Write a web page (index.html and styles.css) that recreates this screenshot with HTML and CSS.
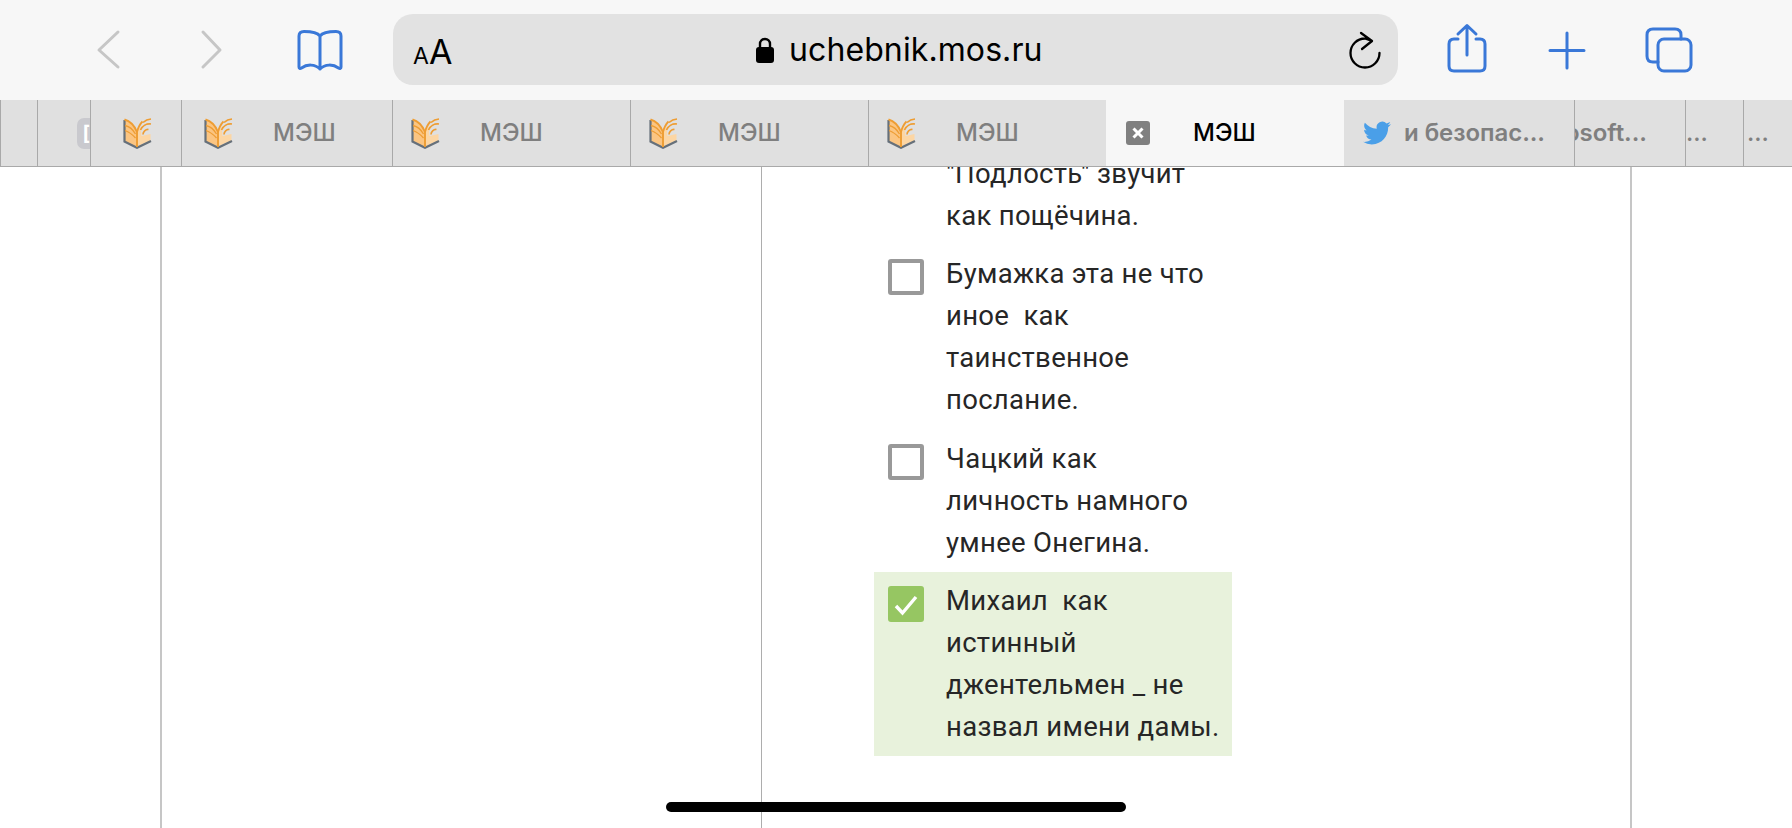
FILE: index.html
```html
<!DOCTYPE html>
<html lang="ru">
<head>
<meta charset="utf-8">
<title>uchebnik.mos.ru</title>
<link rel="stylesheet" href="styles.css">
</head>
<body>
<svg class="defs" width="0" height="0" aria-hidden="true">
  <symbol id="mesh" viewBox="0 0 29 32">
    <path d="M1.500 2.500 C7 4 11.500 9 14 15 V30.500 C10 28 5.500 26 1.500 24.500 Z" fill="#fbc582"/>
    <path d="M14 15 C15 12.500 16 10.500 17.500 9 L18.500 19 L27.500 17 V24 C22 25.500 18 27 14 30.500 Z" fill="#fcd6a4"/>
    <path d="M1.500 3 V24.500 L14 30.800 L28 24" fill="none" stroke="#66707a" stroke-width="2.200"/>
    <path d="M1.500 2.500 C7 4 11.500 9 14 15 V30" fill="none" stroke="#ee9d33" stroke-width="1.900"/>
    <path d="M2 8.500 C6 9.500 10 12.500 12.500 17 M2 13.500 C5 14.500 9 17 12.500 21" fill="none" stroke="#ee9d33" stroke-width="1.300"/>
    <path d="M14 15 C15 11 17 7 19.500 4.500" fill="none" stroke="#ee9d33" stroke-width="1.800"/>
    <path d="M20 17.500 A5 5 0 0 1 25.500 12.500 M17.500 13 A10 10 0 0 1 28 7 M20 5.500 A13 13 0 0 1 28 2" fill="none" stroke="#ee9d33" stroke-width="1.700"/>
  </symbol>
</svg>

<header class="toolbar">
  <div class="btn btn-back"><svg class="icon" viewBox="0 0 48 60"><path class="gray" d="M33 12 L14 30 L33 47"/></svg></div>
  <div class="btn btn-forward"><svg class="icon" viewBox="0 0 48 60"><path class="gray" d="M16 12 L33 30 L16 47"/></svg></div>
  <div class="btn btn-book"><svg class="icon" viewBox="0 0 48 60"><path class="blue" d="M24 16 C21 12 14 11.500 8 11.500 C5 11.500 3 13 3 16 V47 C3 48.500 4 49 5.500 48 C11 44 19 44 24 49 C29 44 37 44 42.500 48 C44 49 45 48.500 45 47 V16 C45 13 43 11.500 40 11.500 C34 11.500 27 12 24 16 Z M24 16 V49"/></svg></div>
  <div class="address">
    <span class="aa"><span class="aa-small">A</span><span class="aa-big">A</span></span>
    <svg class="lock" viewBox="0 0 18 26"><path d="M4 11 V7 a5 5 0 0 1 10 0 V11" fill="none" stroke="#000" stroke-width="2.400"/><rect x="0" y="10" width="18" height="16" rx="3" fill="#000"/></svg>
    <span class="url">uchebnik.mos.ru</span>
    <svg class="reload" viewBox="0 0 32 40"><path d="M30.500 23 A14.500 14.500 0 1 1 16 8.500 L23 11 M12 3 L23 11 L13 19" fill="none" stroke="#000" stroke-width="2.300" stroke-linecap="round" stroke-linejoin="round"/></svg>
  </div>
  <div class="btn btn-share"><svg class="icon" viewBox="0 0 48 60"><path class="blue" d="M15 19 H11 Q6 19 6 24 V46 Q6 51 11 51 H37 Q42 51 42 46 V24 Q42 19 37 19 H33 M24 35 V6 M15 14 L24 5.500 L33 14"/></svg></div>
  <div class="btn btn-plus"><svg class="icon" viewBox="0 0 48 60"><path class="blue" d="M24 13 V48 M7 30.500 H41"/></svg></div>
  <div class="btn btn-tabs"><svg class="icon" viewBox="0 0 48 60"><path class="blue" d="M13 42 H8 Q2 42 2 36 V15 Q2 9 8 9 H30 Q36 9 36 15 V19"/><rect class="blue" x="13" y="19" width="33" height="32" rx="6"/></svg></div>
</header>

<nav class="tabs">
  <div class="tab tab-a"></div>
  <div class="tab tab-b"><span class="stub">[</span></div>
  <div class="tab tab-c"><svg class="fav"><use href="#mesh"/></svg></div>
  <div class="tab tab-d"><svg class="fav"><use href="#mesh"/></svg><span class="label">МЭШ</span></div>
  <div class="tab tab-e"><svg class="fav"><use href="#mesh"/></svg><span class="label">МЭШ</span></div>
  <div class="tab tab-e"><svg class="fav"><use href="#mesh"/></svg><span class="label">МЭШ</span></div>
  <div class="tab tab-f"><svg class="fav"><use href="#mesh"/></svg><span class="label">МЭШ</span></div>
  <div class="tab tab-active"><svg class="close" viewBox="0 0 24 24"><rect width="24" height="24" rx="3" fill="#808080"/><path d="M7.500 7.500 L16.500 16.500 M16.500 7.500 L7.500 16.500" stroke="#fff" stroke-width="3"/></svg><span class="label">МЭШ</span></div>
  <div class="tab tab-tw"><svg class="bird" viewBox="0 0 24 24"><path fill="#4a9fe8" d="M23.950 4.570a10 10 0 0 1-2.820.77 4.960 4.960 0 0 0 2.160-2.720c-.95.55-2 .95-3.120 1.180a4.920 4.920 0 0 0-8.380 4.480C7.690 8.090 4.070 6.130 1.640 3.160a4.820 4.820 0 0 0-.66 2.470c0 1.710.87 3.210 2.190 4.100a4.900 4.900 0 0 1-2.230-.61v.06c0 2.390 1.700 4.380 3.950 4.830a5 5 0 0 1-2.210.08 4.940 4.940 0 0 0 4.600 3.420A9.870 9.870 0 0 1 0 19.540a14 14 0 0 0 7.560 2.210c9.050 0 14-7.500 14-13.980 0-.21 0-.42-.01-.63.96-.69 1.800-1.560 2.460-2.550z"/></svg><span class="label label-long">и безопас...</span></div>
  <div class="tab tab-ms"><span class="label label-long label-clip">osoft...</span></div>
  <div class="tab tab-x"><span class="label label-dots">...</span></div>
  <div class="tab tab-y"><span class="label label-dots">...</span></div>
</nav>

<main class="viewport">
  <div class="page">
    <div class="col-left"></div>
    <div class="col-right">
      <ul class="options">
        <li class="option"><span class="box box-none"></span><p class="text">"Подлость" звучит<br>как пощёчина.</p></li>
        <li class="option"><span class="box"></span><p class="text">Бумажка эта не что<br>иное&nbsp; как<br>таинственное<br>послание.</p></li>
        <li class="option"><span class="box"></span><p class="text">Чацкий как<br>личность намного<br>умнее Онегина.</p></li>
        <li class="option option-on"><span class="box box-on"><svg viewBox="0 0 36 36"><path d="M8 20 L14.500 27 L28 11" fill="none" stroke="#fff" stroke-width="3.400"/></svg></span><p class="text">Михаил&nbsp; как<br>истинный<br>джентельмен _ не<br>назвал имени дамы.</p></li>
      </ul>
    </div>
  </div>
  <div class="home"></div>
</main>
</body>
</html>
```

FILE: styles.css
```css
* { box-sizing: border-box; }
html, body { margin: 0; height: 100%; }
body {
  width: 1792px;
  height: 828px;
  overflow: hidden;
  display: flex;
  flex-direction: column;
  background: #fff;
  font-family: Inter, "Liberation Sans", sans-serif;
}
.defs { position: absolute; }

/* toolbar */
.toolbar {
  flex: 0 0 100px;
  display: flex;
  align-items: center;
  padding-left: 85px;
  background: #f7f7f7;
}
.btn { flex: 0 0 48px; width: 48px; height: 60px; }
.icon { display: block; width: 48px; height: 60px; overflow: visible; }
.gray, .blue { fill: none; stroke-linecap: round; stroke-linejoin: round; }
.gray { stroke: #c6c6c6; stroke-width: 3; }
.blue { stroke: #3a78d8; stroke-width: 3; }
.btn-forward { margin-left: 54px; }
.btn-book { margin-left: 61px; }
.btn-share { margin-left: 45px; }
.btn-plus { margin-left: 52px; }
.btn-tabs { margin-left: 54px; }

.address {
  flex: 0 0 1005px;
  height: 71px;
  margin: -1px 0 0 49px;
  padding: 0 17px 0 20px;
  display: flex;
  align-items: center;
  border-radius: 20px;
  background: #e2e2e2;
  color: #000;
}
.aa { display: flex; align-items: baseline; width: 39px; line-height: 1; margin-top: 4px; }
.aa-small { font-size: 23px; }
.aa-big { font-size: 34px; }
.lock { width: 18px; height: 26px; margin-left: 304px; margin-top: 1px; }
.url { margin-left: 15px; font-size: 32px; line-height: 1; letter-spacing: .1px; }
.reload { width: 32px; height: 40px; margin-left: auto; overflow: visible; margin-top: 1px; }

/* tabs */
.tabs {
  flex: 0 0 67px;
  display: flex;
  background: #e0e0e0;
  border-bottom: 1px solid #a9a9a9;
}
.tab {
  display: flex;
  align-items: center;
  height: 66px;
  overflow: hidden;
  border-left: 1px solid #a9a9a9;
  padding-left: 22px;
}
.tab-a { width: 37px; padding: 0; }
.tab-b { width: 53px; justify-content: flex-end; padding: 0; }
.tab-c { width: 91px; padding-left: 32px; }
.tab-d { width: 211px; }
.tab-e { width: 238px; padding-left: 18px; }
.tab-f { width: 238px; padding-left: 18px; }
.tab-active { width: 238px; padding-left: 20px; background: #f7f7f7; border-left: 0; }
.tab-tw { width: 230px; padding-left: 19px; border-left: 0; }
.tab-ms { width: 111px; padding-left: 0; }
.tab-x { width: 58px; padding-left: 0; }
.tab-y { flex: 1; padding-left: 3px; }

.stub {
  width: 13px;
  height: 31px;
  border-radius: 7px 0 0 7px;
  background: #c9c9ce;
  color: #fff;
  font-size: 20px;
  font-weight: 700;
  line-height: 31px;
  text-align: right;
  overflow: hidden;
}
.fav { flex: none; width: 29px; height: 32px; }
.close { flex: none; width: 24px; height: 24px; }
.bird { flex: none; width: 28px; height: 28px; }
.label {
  margin-left: 40px;
  font-size: 24px;
  font-weight: 500;
  line-height: 1;
  color: #7f7f7f;
  white-space: nowrap;
}
.tab-active .label { margin-left: 43px; color: #000; }
.label-long { margin-left: 13px; font-weight: 600; letter-spacing: -.05px; }
.label-clip { margin-left: -10px; }
.label-dots { margin-left: 0; font-weight: 500; }

/* page */
.viewport { position: relative; flex: 1; overflow: hidden; }
.page {
  display: flex;
  height: 100%;
  width: 1472px;
  margin-left: 160px;
  border-left: 2px solid #c6c6c6;
  border-right: 2px solid #c6c6c6;
}
.col-left { flex: 0 0 600px; border-right: 1px solid #adadad; }
.col-right { flex: 1; padding-left: 112px; }
.options { list-style: none; width: 358px; margin: -22px 0 0; padding: 0; }
.option { display: flex; padding: 8px 0 8px 14px; }
.option-on { background: #e8f2dc; }
.box {
  flex: none;
  width: 36px;
  height: 36px;
  margin: 6px 22px 0 0;
  border: 4px solid #999;
  border-radius: 3px;
  background: #fff;
}
.box-none { visibility: hidden; }
.box-on { border: 0; background: #96c662; }
.box-on svg { display: block; width: 36px; height: 36px; }
.text {
  margin: 0;
  font-family: Roboto, "Liberation Sans", sans-serif;
  font-size: 27.5px;
  line-height: 42.1px;
  letter-spacing: .3px;
  color: #262626;
  white-space: nowrap;
}

.home {
  position: absolute;
  left: 666px;
  bottom: 16px;
  width: 460px;
  height: 10px;
  border-radius: 5px;
  background: #000;
}
```
